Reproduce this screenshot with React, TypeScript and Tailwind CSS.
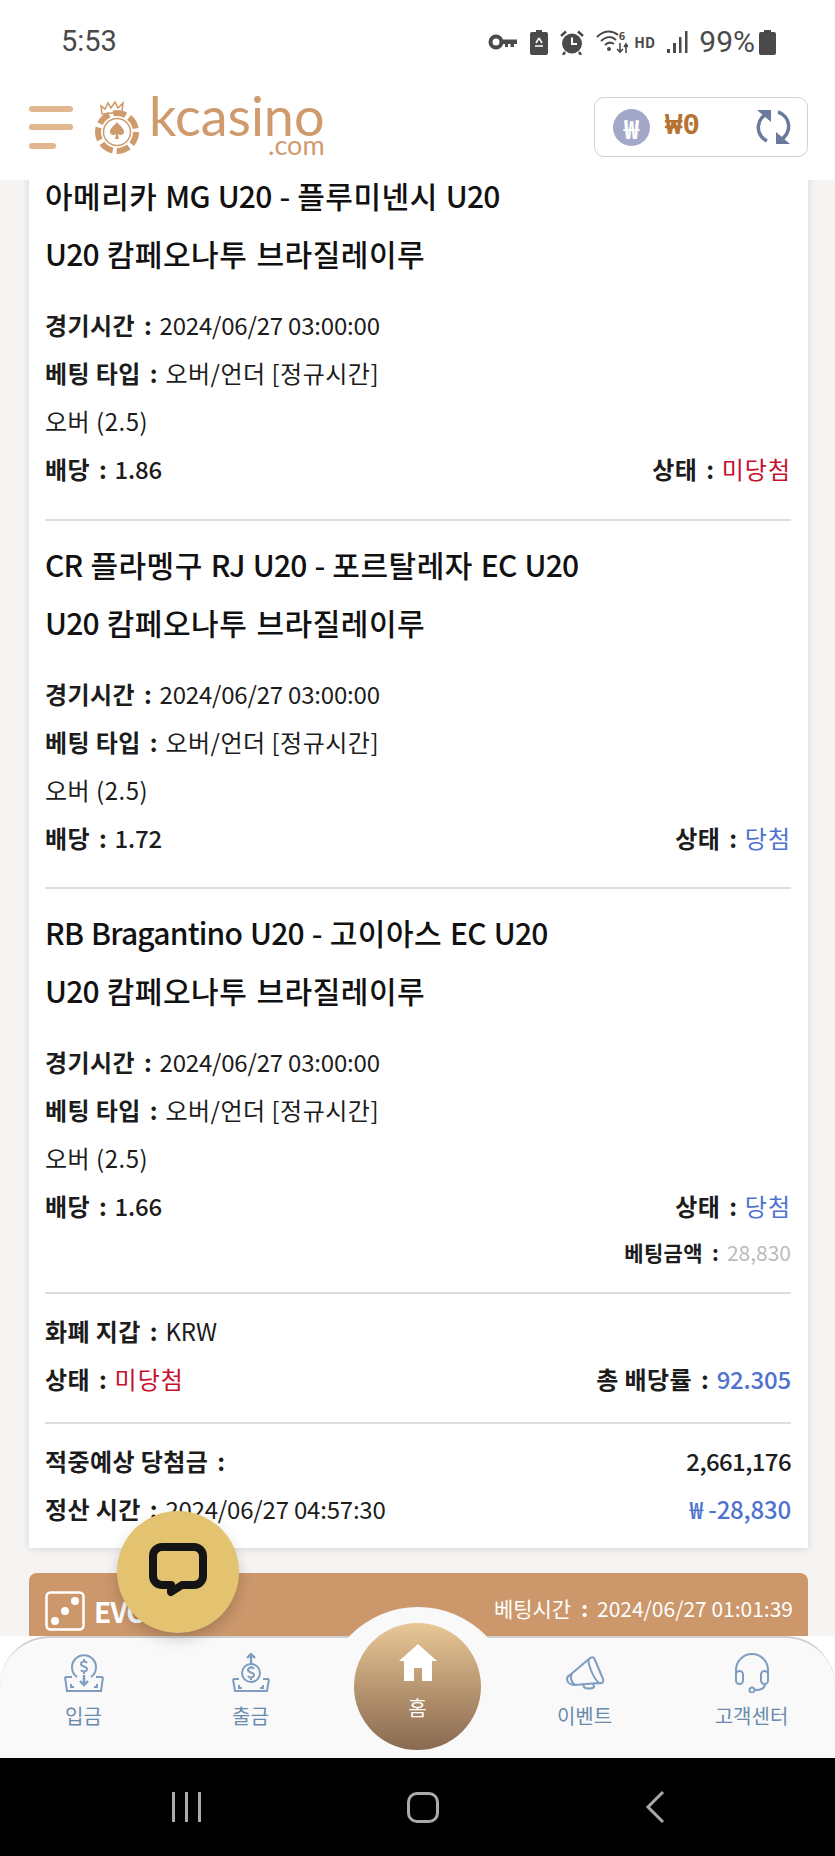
import React from "react";

const font = { fontFamily: '"Noto Sans CJK KR", "Noto Sans", sans-serif' };

const Row = ({ left, right }: { left: React.ReactNode; right?: React.ReactNode }) => (
	<div className="flex h-[48px] items-center justify-between text-[24px] tracking-[-0.2px] text-[#1c1c1c]">
		<div className="flex items-center">{left}</div>
		{right && <div className="flex items-center">{right}</div>}
	</div>
);

const Colon = () => <span className="ml-[9px] mr-[8px] font-bold">:</span>;

const Label = ({ children }: { children: React.ReactNode }) => (
	<>
		<span className="font-bold tracking-[0.4px]">{children}</span>
		<Colon />
	</>
);

const Korean = ({ children }: { children: React.ReactNode }) => (
	<span className="tracking-[0.5px]">{children}</span>
);

const Status = ({ won }: { won: boolean }) => (
	<>
		<Label>상태</Label>
		<span className={won ? "tracking-[1px] text-[#4f72cf]" : "tracking-[1px] text-[#c8102e]"}>
			{won ? "당첨" : "미당첨"}
		</span>
	</>
);

// latin runs sit tighter than hangul in the titles
const Title = ({ text }: { text: string }) => (
	<div className="[word-spacing:2px]">
		{text.split(/([A-Za-z0-9 -]+)/).map((part, index) =>
			/[A-Za-z0-9]/.test(part) ? (
				<span key={index} className="tracking-[-0.8px]">{part}</span>
			) : (
				<span key={index} className="tracking-[0.5px]">{part}</span>
			),
		)}
	</div>
);

const Match = ({ title, odds, won }: { title: string; odds: string; won: boolean }) => (
	<div>
		<div className="text-[30px] font-medium leading-[58px] text-[#111]">
			<Title text={title} />
			<Title text="U20 캄페오나투 브라질레이루" />
		</div>
		<div className="mt-[19px]">
			<Row left={<><Label>경기시간</Label>2024/06/27 03:00:00</>} />
			<Row left={<><Label>베팅 타입</Label><Korean>오버/언더 [정규시간]</Korean></>} />
			<Row left={<Korean>오버 (2.5)</Korean>} />
			<Row left={<><Label>배당</Label><span className="font-medium">{odds}</span></>} right={<Status won={won} />} />
		</div>
	</div>
);

const Divider = ({ className }: { className: string }) => (
	<div className={`h-[2px] bg-[#dddddd] ${className}`} />
);

const StatusIcons = () => (
	<div className="flex items-center text-[#4a4a4a]">
		<svg width="30" height="18" viewBox="0 0 30 18" className="mr-[12px]">
			<circle cx="8" cy="9" r="5.5" fill="none" stroke="currentColor" strokeWidth="4" />
			<path d="M14 6.5h15v4.5h-3v3h-3.5v-3h-2.5v3h-3v-3h-3z" fill="currentColor" />
		</svg>
		<svg width="18" height="25" viewBox="0 0 18 25" className="mr-[12px]">
			<path d="M6 0h6v2h4a2 2 0 0 1 2 2v19a2 2 0 0 1-2 2H2a2 2 0 0 1-2-2V4a2 2 0 0 1 2-2h4z" fill="currentColor" />
			<path d="M9 8l3 5M9 8l-3 5M5 16h8" stroke="#fff" strokeWidth="1.5" fill="none" />
		</svg>
		<svg width="24" height="25" viewBox="0 0 24 25" className="mr-[12px]">
			<circle cx="12" cy="13.5" r="10" fill="currentColor" />
			<path d="M12 7.5v6.5h5" stroke="#fff" strokeWidth="2" fill="none" />
			<path d="M1 6l5-4.5M23 6l-5-4.5M5 22l-2 3M19 22l2 3" stroke="currentColor" strokeWidth="2.5" fill="none" />
		</svg>
		<div className="relative mr-[6px] h-[24px] w-[32px]">
			<svg width="32" height="24" viewBox="0 0 32 24">
				<path d="M1 7c7-7 15-7 21-2M5 11c5-5 11-5 15-1M9 15c3-3 6-3 9-1" stroke="currentColor" strokeWidth="2" fill="none" />
				<circle cx="13" cy="19" r="2" fill="currentColor" />
				<path d="M24 13v9M21 19l3 3 3-3M30 23v-9M28 17l2-3 2 3" stroke="currentColor" strokeWidth="1.6" fill="none" />
			</svg>
			<span className="absolute right-[3px] top-[-1px] text-[11px] font-bold leading-[12px]">6</span>
		</div>
		<span className="mr-[12px] w-[20px] text-[14px] font-bold leading-none">HD</span>
		<svg width="22" height="24" viewBox="0 0 22 24" className="mr-[11px]">
			<path d="M1 19h3v4H1zM7 13h3v10H7zM13 7h2.5v16H13zM19 1h2.5v22H19z" fill="currentColor" />
		</svg>
		<span className="mr-[4px] text-[30px] leading-none" style={{ fontFamily: "Roboto, sans-serif" }}>99%</span>
		<svg width="17" height="25" viewBox="0 0 17 25">
			<path d="M5 0h7v2h3a2 2 0 0 1 2 2v19a2 2 0 0 1-2 2H2a2 2 0 0 1-2-2V4a2 2 0 0 1 2-2h3z" fill="currentColor" />
		</svg>
	</div>
);

const ChipLogo = () => (
	<svg width="46" height="56" viewBox="0 0 46 56" className="text-[#cf9b6c]">
		<path d="M8 15l-1-8 4 3 3-6 3 5 4-6 3 6 5-5-1 9z" fill="none" stroke="currentColor" strokeWidth="1.6" />
		<circle cx="23" cy="33" r="19" fill="none" stroke="currentColor" strokeWidth="6" strokeDasharray="13 4" />
		<circle cx="23" cy="33" r="13.5" fill="none" stroke="currentColor" strokeWidth="1.5" />
		<path d="M23 23c3 4 7 6 7 10 0 3-4 4-6 2l1 5h-4l1-5c-2 2-6 1-6-2 0-4 4-6 7-10z" fill="currentColor" />
	</svg>
);

const RefreshIcon = () => (
	<svg width="37" height="36" viewBox="0 0 37 36" fill="none" className="text-[#6a7a9e]">
		<path d="M14 4A15 15 0 0 0 12 32" stroke="currentColor" strokeWidth="3.5" />
		<path d="M23 3A15 15 0 0 1 25 31" stroke="currentColor" strokeWidth="3.5" />
		<path d="M2 1h14v12z" fill="currentColor" />
		<path d="M35 35H21V23z" fill="currentColor" />
	</svg>
);

const DepositIcon = () => (
	<svg width="40" height="40" viewBox="0 0 40 40" fill="none" stroke="#7f9dc0" strokeWidth="2">
		<path d="M13 24a12 12 0 1 1 14 0" />
		<path d="M23 10c-1-2-6-2-6 1s6 2 6 5-5 3-6 1M20 6v2M20 19v2" />
		<path d="M20 22v9M16 28l4 4 4-4" strokeWidth="2.4" />
		<path d="M1 24h7M32 24h7M1 24l2 14h34l2-14M7 31v3h3M33 31v3h-3" />
	</svg>
);

const WithdrawIcon = () => (
	<svg width="38" height="40" viewBox="0 0 38 40" fill="none" stroke="#7f9dc0" strokeWidth="2">
		<path d="M19 11V1M15 5l4-4 4 4" strokeWidth="2.4" />
		<circle cx="19" cy="20" r="9" />
		<path d="M22 16c-1-2-6-2-6 1s6 2 6 5-5 3-6 1M19 13v2M19 25v2" />
		<path d="M1 26h6M31 26h6M1 26l2 12h32l2-12M7 32v3h3M31 32v3h-3" />
	</svg>
);

const MegaphoneIcon = () => (
	<svg width="40" height="34" viewBox="0 0 40 34" fill="none" stroke="#7f9dc0" strokeWidth="2" strokeLinejoin="round">
		<path d="M5 19L24 3C27 0 29 1 30 4L38 23C39 26 37 28 34 27L9 29C5 29 2 26 2 23C2 21 3 20 5 19Z" />
		<path d="M24 3C22 6 28 22 34 27" />
		<path d="M7 18C5 20 6 27 10 29" />
		<path d="M18 28l1 3c1 2 9 2 10 0l-1-4" />
	</svg>
);

const HeadsetIcon = () => (
	<svg width="36" height="40" viewBox="0 0 36 40" fill="none" stroke="#7f9dc0" strokeWidth="2">
		<path d="M2 24V17a16 16 0 0 1 32 0v7" />
		<rect x="2" y="18" width="7" height="13" rx="3.5" />
		<rect x="27" y="18" width="7" height="13" rx="3.5" />
		<path d="M31 31c0 4-3 6-10 6" />
		<circle cx="18" cy="37" r="2.5" />
	</svg>
);

const NavItem = ({ icon, label }: { icon: React.ReactNode; label: string }) => (
	<div className="flex flex-col items-center">
		<div className="flex h-[40px] items-center">{icon}</div>
		<span className="mt-[8px] text-[20px] leading-[30px] text-[#6a8bad]">{label}</span>
	</div>
);

const App = () => {
	return (
		<div className="relative flex h-[1856px] w-[835px] flex-col overflow-hidden bg-[#f5f4f2]" style={font}>
			{/* status bar + logo */}
			<header className="relative z-10 h-[180px] shrink-0 bg-white">
				<div className="flex h-[84px] items-center justify-between pl-[61px] pr-[59px]">
					<span className="text-[29px] text-[#4a4a4a]" style={{ fontFamily: "Roboto, sans-serif" }}>5:53</span>
					<StatusIcons />
				</div>
				<div className="mt-[12px] flex items-center justify-between pl-[29px] pr-[27px]">
					<div className="flex items-center">
						<div className="flex w-[44px] flex-col gap-[12.5px]">
							<div className="h-[6px] w-[44px] rounded-full bg-[#e0b78f]" />
							<div className="h-[6px] w-[44px] rounded-full bg-[#e0b78f]" />
							<div className="h-[6px] w-[27px] rounded-full bg-[#e0b78f]" />
						</div>
						<div className="ml-[21px]"><ChipLogo /></div>
						<div className="mb-[6px] ml-[9px] flex flex-col items-end text-[#cf9b6c]" style={{ fontFamily: "Lato, sans-serif" }}>
							<span className="text-[54px] leading-[40px]">kcasino</span>
							<span className="mt-[2px] text-[27px] leading-[14px]">.com</span>
						</div>
					</div>
					<div className="flex h-[60px] w-[214px] items-center rounded-[10px] border-[1.5px] border-[#d2d2d2] pl-[18px] pr-[15px]">
						<div className="flex h-[37px] w-[37px] items-center justify-center rounded-full bg-[#a3a8c9] text-[26px] font-bold text-white">₩</div>
						<span className="ml-[15px] text-[29px] font-bold text-[#b57333]" style={{ fontFamily: '"Liberation Mono", monospace' }}>₩0</span>
						<div className="ml-auto"><RefreshIcon /></div>
					</div>
				</div>
			</header>

			<main className="min-h-0 flex-1 overflow-hidden pl-[29px] pr-[27px] -mt-[14px]">
				<section className="bg-white pb-[15px] pl-[16px] pr-[17px] shadow-[0_1px_8px_rgba(0,0,0,0.12)]">
					<Match title="아메리카 MG U20 - 플루미넨시 U20" odds="1.86" won={false} />
					<Divider className="mb-[14px] mt-[26px]" />
					<Match title="CR 플라멩구 RJ U20 - 포르탈레자 EC U20" odds="1.72" won />
					<Divider className="mb-[14px] mt-[25px]" />
					<Match title="RB Bragantino U20 - 고이아스 EC U20" odds="1.66" won />
					<div className="flex h-[46px] items-center justify-end text-[21px] text-[#1c1c1c]">
						<Label>베팅금액</Label>
						<span className="text-[#bbbbbb]">28,830</span>
					</div>
					<Divider className="mb-[13px] mt-[16px]" />
					<Row left={<><Label>화폐 지갑</Label>KRW</>} />
					<Row
						left={<Status won={false} />}
						right={<><Label>총 배당률</Label><span className="font-medium text-[#4f72cf]">92.305</span></>}
					/>
					<Divider className="mb-[13px] mt-[19px]" />
					<Row left={<Label>적중예상 당첨금</Label>} right={<span className="font-medium tracking-[-0.6px]">2,661,176</span>} />
					<Row
						left={<><Label>정산 시간</Label>2024/06/27 04:57:30</>}
						right={<span className="font-medium text-[#4f72cf]">₩ -28,830</span>}
					/>
				</section>

				<section className="mt-[25px] flex h-[120px] items-start justify-between rounded-t-[8px] bg-[#cb976b] pl-[16px] pr-[15px] pt-[17px] text-white">
					<div className="flex items-center gap-[9px]">
						<svg width="40" height="40" viewBox="0 0 40 40" fill="none">
							<rect x="1.5" y="1.5" width="37" height="37" rx="4" stroke="#fff" strokeWidth="2.5" />
							<circle cx="30" cy="10" r="4" fill="#fff" />
							<circle cx="20" cy="20" r="4" fill="#fff" />
							<circle cx="10" cy="30" r="4" fill="#fff" />
						</svg>
						<span className="text-[28px] font-bold tracking-[-1px]">EVO</span>
					</div>
					<div className="mt-[3px] flex items-center text-[21px]">
						<span>베팅시간</span>
						<span className="ml-[10px] mr-[9px] font-bold">:</span>
						<span>2024/06/27 01:01:39</span>
					</div>
				</section>
			</main>

			{/* chat button */}
			<div className="absolute left-[117px] top-[1511px] z-30 flex h-[122px] w-[122px] items-center justify-center rounded-full bg-[#e3c270] shadow-[0_6px_14px_rgba(0,0,0,0.18)]">
				<svg width="58" height="58" viewBox="0 0 58 58" fill="none">
					<path d="M13 4h32a9 9 0 0 1 9 9v20a9 9 0 0 1-9 9H33l-11 7v-7h-9a9 9 0 0 1-9-9V13a9 9 0 0 1 9-9z" stroke="#141414" strokeWidth="8" strokeLinejoin="round" />
				</svg>
			</div>

			{/* bottom nav */}
			<nav className="relative z-20 h-[122px] shrink-0 bg-white">
				<div className="grid h-full grid-cols-5 rounded-t-[50px] border-t-2 border-[#cfcfcf] bg-[#f9f9f9] pt-[15px]">
					<NavItem icon={<DepositIcon />} label="입금" />
					<NavItem icon={<WithdrawIcon />} label="출금" />
					<div />
					<NavItem icon={<MegaphoneIcon />} label="이벤트" />
					<NavItem icon={<HeadsetIcon />} label="고객센터" />
				</div>
				<div className="absolute left-[323px] top-[-29px] h-[120px] w-[190px] rounded-t-[95px] bg-[#f9f9f9]" />
				<div className="absolute left-[354px] top-[-13px] flex h-[127px] w-[127px] flex-col items-center rounded-full bg-gradient-to-b from-[#e9c796] to-[#8a6a50] pt-[20px] text-white">
					<svg width="38" height="38" viewBox="0 0 38 38">
						<path d="M19 1L0 18h5v20h10V25h8v13h10V18h5z" fill="#fff" />
					</svg>
					<span className="mt-[12px] text-[20px] leading-[30px]">홈</span>
				</div>
			</nav>

			{/* android nav */}
			<div className="flex h-[98px] shrink-0 items-center justify-between bg-black pl-[172px] pr-[170px]">
				<div className="flex gap-[10px]">
					<div className="h-[30px] w-[3px] bg-[#aaaaaa]" />
					<div className="h-[30px] w-[3px] bg-[#aaaaaa]" />
					<div className="h-[30px] w-[3px] bg-[#aaaaaa]" />
				</div>
				<div className="h-[31px] w-[32px] rounded-[10px] border-[3px] border-[#aaaaaa]" />
				<svg width="20" height="34" viewBox="0 0 20 34" fill="none">
					<path d="M18 2L3 17l15 15" stroke="#aaaaaa" strokeWidth="3" />
				</svg>
			</div>
		</div>
	);
};

export default App;
